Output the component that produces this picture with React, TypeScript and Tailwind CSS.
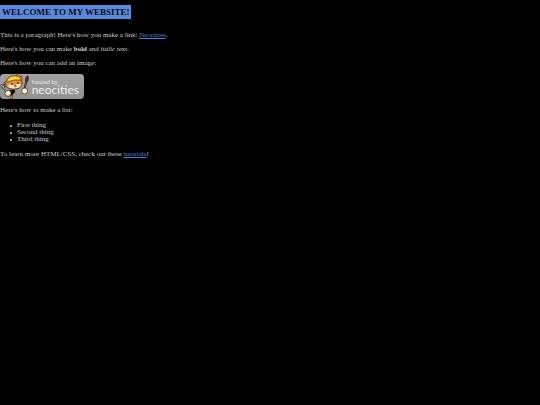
import React from 'react';

const LIST_ITEMS = ['First thing', 'Second thing', 'Third thing'];

// "Hosted by Neocities" badge with Penelope the cat
const NeocitiesBadge = () => {
    return (
        <svg viewBox="0 0 252 75" className="block h-[25px] w-[84px]" role="img" aria-label="Hosted by Neocities">
            <defs>
                <linearGradient id="plate" x1="0" y1="0" x2="0" y2="1">
                    <stop offset="0" stopColor="#a2a2a2" />
                    <stop offset="1" stopColor="#929292" />
                </linearGradient>
            </defs>
            <rect width="252" height="75" rx="11" fill="url(#plate)" />

            {/* body and legs */}
            <path d="M29 48 L43 46 L46 54 L39 61 L37 73 L29 75 L32 63 Z" fill="#17110e" />
            <path d="M31 66 l7 -3 l-2 9 l-7 1 z" fill="#c87922" />

            {/* wrench */}
            <path d="M3 31 L7 40 L14 37 L12 29 M9 39 L22 57" fill="none" stroke="#333333" strokeWidth="6" />
            <path d="M3 32 L7 39 L13 36 M9 39 L21 54" fill="none" stroke="#b9bfc2" strokeWidth="3" />

            {/* head */}
            <path
                d="M20 22 C22 9 32 5 44 6 L54 2 L60 8 L65 7 L66 27 C66 38 58 45 47 45 C33 47 20 43 17 34 L14 24 Z"
                fill="#e68f3a"
                stroke="#33200f"
                strokeWidth="2"
            />
            <path d="M24 35 C29 29 37 32 43 35 C49 28 57 28 63 31 C61 39 55 42 46 43 C35 44 27 42 24 35 Z" fill="#f9e6cb" />
            <path d="M20 25 C21 12 30 5 45 6 C54 5 60 9 63 19 C49 16 34 19 20 25 Z" fill="#ecbd34" stroke="#7d5514" strokeWidth="2" />
            <path d="M25 18 Q40 9 57 14 M32 9 L40 17 M43 7 L49 14" fill="none" stroke="#fae05b" strokeWidth="3" />
            <path d="M21 26 Q41 16 63 19" fill="none" stroke="#9a6012" strokeWidth="2" />
            <ellipse cx="36" cy="30" rx="2" ry="3" fill="#1d120c" />
            <ellipse cx="54" cy="27" rx="2" ry="3" fill="#1d120c" />
            <path d="M44 34 h5 l-3 3 z M41 38 Q46 41 51 37" fill="#6c2f18" stroke="#6c2f18" strokeWidth="1" />

            {/* brush */}
            <path d="M80 20 L73 46" stroke="#23140e" strokeWidth="6" />
            <path d="M80 20 L74 44" stroke="#c7792c" strokeWidth="2" />
            <path d="M77 21 C75 13 79 9 82 5 C87 10 86 17 83 22 Z" fill="#8b1814" stroke="#241210" strokeWidth="2" />

            {/* paws */}
            <circle cx="24" cy="58" r="9" fill="#fff5df" stroke="#241710" strokeWidth="2" />
            <circle cx="74" cy="51" r="9" fill="#fff5df" stroke="#241710" strokeWidth="2" />
            <path d="M16 61 Q23 67 30 62 M67 55 Q73 62 80 55" fill="none" stroke="#d99a48" strokeWidth="2" />

            <g fill="#f0f0f0">
                <text x="95" y="29" fontSize="17" className="font-['Open_Sans',sans-serif]">
                    hosted by
                </text>
                <text x="95" y="59" fontSize="36" className="font-['Lato',sans-serif]">
                    neocities
                </text>
            </g>
        </svg>
    );
};

const App = () => {
    return (
        <div className="min-h-screen bg-black pt-[5px] font-['Liberation_Serif',serif] text-[7px] leading-[7px] text-[#cccccc]">
            <h1 className="w-fit bg-[#5b8add] px-0.5 text-[9px] leading-[14px] font-bold text-[#050b18] uppercase">
                Welcome to my Website!
            </h1>

            <main className="mt-[13px] flex flex-col gap-2">
                <div className="flex flex-col gap-[7px]">
                    <p>
                        This is a paragraph! Here's how you make a link:{' '}
                        <a href="https://neocities.org" className="text-[#5482d4] underline">
                            Neocities
                        </a>
                        .
                    </p>
                    <p>
                        Here's how you can make <strong className="font-bold">bold</strong> and <em>italic</em> text.
                    </p>
                    <p>Here's how you can add an image:</p>
                    <NeocitiesBadge />
                </div>

                <p>Here's how to make a list:</p>

                <ul className="pl-[10px]">
                    {LIST_ITEMS.map((item) => (
                        <li
                            key={item}
                            className="flex items-center gap-[5px] before:size-0.5 before:rounded-full before:bg-[#cccccc] before:content-['']"
                        >
                            {item}
                        </li>
                    ))}
                </ul>

                <p>
                    To learn more HTML/CSS, check out these{' '}
                    <a href="https://neocities.org/tutorials" className="text-[#5482d4] underline">
                        tutorials
                    </a>
                    !
                </p>
            </main>
        </div>
    );
};

export default App;
